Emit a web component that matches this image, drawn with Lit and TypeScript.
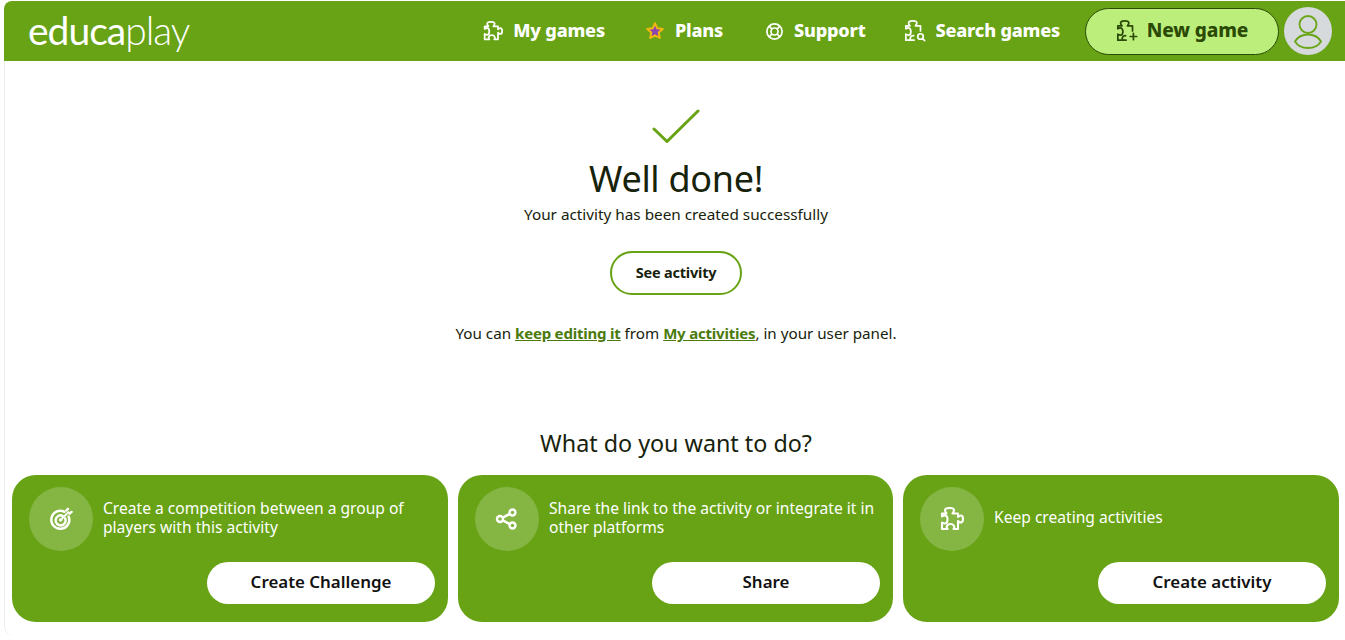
import { LitElement, html, css, svg } from "lit";
import { customElement } from "lit/decorators.js";

const GREEN = css`#67a315`;

const PUZZLE = "M2 6.500H6.500C5.500 5 5 4.300 5 3.300 5 1.600 7 1 9.500 1S14 1.600 14 3.300C14 4.300 13.500 5 12.500 6.500H18V10C19 8.800 20 8.500 20.800 8.500 22 8.500 23 10 23 12S22 15.500 20.800 15.500C20 15.500 19 15.200 18 14V22H13.500C14.500 20.800 14.500 20 14 19 13.500 17.800 12 17 10.500 17S7.500 17.800 7 19C6.500 20 6.500 20.800 7.500 22H2V15.500C3 16.200 4 16.500 4.800 16.500 6.500 16.500 7.500 14.500 7.500 12.500S6.500 8.500 4.800 8.500C4 8.500 3 8.800 2 9.500Z";
const PUZZLE_OPEN = "M11 22H7.500C6.500 20.800 6.500 20 7 19 7.500 17.800 9 17 10.500 17M7.500 22H2V15.500C3 16.200 4 16.500 4.800 16.500 6.500 16.500 7.500 14.500 7.500 12.500S6.500 8.500 4.800 8.500C4 8.500 3 8.800 2 9.500V6.500H6.500C5.500 5 5 4.300 5 3.300 5 1.600 7 1 9.500 1S14 1.600 14 3.300C14 4.300 13.500 5 12.500 6.500H18V12";

const puzzle = (s: number) => html`<svg class="ic" width=${s} height=${s} viewBox="0 0 24 24" fill="none" stroke="currentColor" stroke-width="2.100" stroke-linejoin="round"><path d=${PUZZLE}></path></svg>`;

const puzzleExtra = (s: number, extra: unknown) => html`<svg class="ic" width=${s} height=${s} viewBox="0 0 24 24" fill="none" stroke="currentColor" stroke-width="1.900" stroke-linecap="round" stroke-linejoin="round">
  <path d=${PUZZLE_OPEN}></path>
  ${extra}
</svg>`;

const target = html`<svg class="ic" width="26" height="26" viewBox="0 0 26 26" fill="none" stroke="#fff" stroke-linecap="round">
  <path d="M16.500 5.800A9 9 0 1 0 20.700 10.500" stroke-width="2.500"></path>
  <path d="M14.600 9.800A5 5 0 1 0 17.200 12.400" stroke-width="2.500"></path>
  <circle cx="12.600" cy="14" r="1.800" fill="#fff" stroke="none"></circle>
  <path d="M12.600 14 20.500 6.100" stroke-width="1.900"></path>
  <path d="M18.300 4.500 20 2.800M21.600 7.700 23.600 5.900" stroke-width="2.400"></path>
</svg>`;

const share = html`<svg class="ic" width="26" height="26" viewBox="0 0 26 26" fill="none" stroke="#fff" stroke-width="2.400">
  <circle cx="6" cy="13" r="3"></circle><circle cx="18.500" cy="6.500" r="3"></circle><circle cx="18.500" cy="19.500" r="3"></circle>
  <path d="M8.700 11.600 15.800 7.900M8.700 14.400 15.800 18.100"></path>
</svg>`;

const star = html`<svg class="ic" width="20" height="20" viewBox="0 0 20 20"><path d="M10 2.200 12.300 7.300 17.800 7.900 13.700 11.600 14.800 17 10 14.300 5.200 17 6.300 11.600 2.200 7.900 7.700 7.300Z" fill="#8e44ad" stroke="#f1b90f" stroke-width="2" stroke-linejoin="round"></path></svg>`;

const lifebuoy = html`<svg class="ic" width="19" height="19" viewBox="0 0 20 20" fill="none" stroke="#fff" stroke-width="1.800">
  <circle cx="10" cy="10" r="8"></circle><circle cx="10" cy="10" r="3.700"></circle>
  <path d="M4.400 4.400 7.400 7.400M15.600 4.400 12.600 7.400M4.400 15.600 7.400 12.600M15.600 15.600 12.600 12.600"></path>
</svg>`;

const avatar = html`<svg width="48" height="48" viewBox="0 0 48 48" fill="none" stroke="#6aa516" stroke-width="1.800">
  <circle cx="24" cy="17.500" r="8.500"></circle>
  <path d="M11 34.500C14 29.500 19 27.500 24 27.500S34 29.500 37 34.500C34 39.500 29 41 24 41S14 39.500 11 34.500Z"></path>
</svg>`;

@customElement("app-root")
export class AppRoot extends LitElement {
  static styles = css`
    :host {
      display: flex;
      flex-direction: column;
      height: 640px;
      box-sizing: border-box;
      padding: 1px 0 0 4px;
      background: #fff;
      overflow: hidden;
      font-family: "Noto Sans", sans-serif;
      color: #17220b;
    }
    .ic { display: block; flex: none; }
    header {
      height: 60px;
      flex: none;
      background: ${GREEN};
      border-top-left-radius: 8px;
      display: flex;
      align-items: center;
      color: #fff;
      padding: 0 13px 0 24px;
    }
    .logo {
      font-family: "Lato", sans-serif;
      font-size: 39px;
      font-weight: 400;
      letter-spacing: -1px;
      line-height: 40px;
      margin-top: -3px;
      margin-right: auto;
    }
    .logo span { font-weight: 300; }
    nav { display: flex; align-items: center; }
    .nav-item {
      display: flex;
      align-items: center;
      gap: 10px;
      font-size: 18.100px;
      font-weight: 800;
      letter-spacing: -0.2px;
      white-space: nowrap;
    }
    .nav-item span { margin-top: -3px; }
    .new span { margin-top: -2px; }
    .g40 { margin-right: 40px; }
    .g42 { margin-right: 42px; }
    .g38 { margin-right: 38px; }
    .new {
      display: flex;
      align-items: center;
      justify-content: center;
      gap: 9px;
      box-sizing: border-box;
      width: 194px;
      height: 47px;
      border-radius: 24px;
      background: #bcee7c;
      border: 1px solid #2b4a05;
      color: #2b4a05;
      font-size: 19px;
      font-weight: 800;
      letter-spacing: -0.1px;
      margin-left: 25px;
    }
    .avatar {
      width: 48px;
      height: 48px;
      border-radius: 50%;
      background: #d6dadd;
      margin-left: 5px;
      flex: none;
    }
    main {
      flex: none;
      height: 575px;
      box-sizing: border-box;
      display: flex;
      flex-direction: column;
      align-items: center;
      padding-left: 2px;
      border-left: 1px solid #ececec;
      border-bottom-left-radius: 10px;
    }
    .check { margin-top: 48px; }
    h1 {
      margin: 10px 0 0;
      font-size: 36px;
      line-height: 48px;
      font-weight: 400;
      letter-spacing: -0.3px;
    }
    .sub { margin: 0; font-size: 15.300px; line-height: 22px; }
    .see {
      box-sizing: border-box;
      margin-top: 26px;
      padding-bottom: 3px;
      width: 132px;
      height: 44px;
      border-radius: 22px;
      border: 2px solid ${GREEN};
      display: flex;
      align-items: center;
      justify-content: center;
      font-size: 14.500px;
      font-weight: 700;
      letter-spacing: -0.2px;
    }
    .links { margin: 27px 0 0; font-size: 15.200px; line-height: 22px; }
    .links a { color: #4a7a0c; font-size: 15px; font-weight: 700; letter-spacing: -0.2px; text-decoration: underline; }
    h2 {
      margin: 83px 0 0;
      font-size: 23.300px;
      line-height: 32px;
      font-weight: 400;
    }
    .cards {
      align-self: stretch;
      display: grid;
      grid-template-columns: 436px 435px 436px;
      gap: 10px;
      margin: 16px 0 0 5px;
    }
    .card {
      background: ${GREEN};
      border-radius: 24px;
      height: 147px;
      box-sizing: border-box;
      padding: 12px 13px 18px 17px;
      display: flex;
      flex-direction: column;
      color: #fff;
    }
    .top { display: flex; align-items: center; gap: 10px; }
    .bubble {
      width: 64px;
      height: 64px;
      border-radius: 50%;
      background: rgba(255, 255, 255, 0.2);
      display: flex;
      align-items: center;
      justify-content: center;
      flex: none;
    }
    .text { font-size: 15.600px; line-height: 19px; flex: 1; margin-top: -3px; }
    .btn {
      margin-top: auto;
      align-self: flex-end;
      box-sizing: border-box;
      padding-bottom: 4px;
      width: 228px;
      height: 42px;
      border-radius: 21px;
      background: #fff;
      color: #111;
      display: flex;
      align-items: center;
      justify-content: center;
      font-size: 16.900px;
      font-weight: 600;
    }
  `;

  render() {
    const plus = svg`<path d="M19 14.500v7M15.500 18h7"></path>`;
    const lens = svg`<circle cx="18" cy="18" r="3"></circle><path d="M20.300 20.300 22.500 22.500"></path>`;
    const cards = [
      { icon: target, text: "Create a competition between a group of players with this activity", btn: "Create Challenge" },
      { icon: share, text: "Share the link to the activity or integrate it in other platforms", btn: "Share" },
      { icon: puzzle(24), text: "Keep creating activities", btn: "Create activity" },
    ];
    return html`
      <header>
        <div class="logo">educa<span>play</span></div>
        <nav>
          <div class="nav-item g40">${puzzle(20)}<span>My games</span></div>
          <div class="nav-item g42">${star}<span>Plans</span></div>
          <div class="nav-item g38">${lifebuoy}<span>Support</span></div>
          <div class="nav-item">${puzzleExtra(22, lens)}<span>Search games</span></div>
        </nav>
        <div class="new">${puzzleExtra(22, plus)}<span>New game</span></div>
        <div class="avatar">${avatar}</div>
      </header>
      <main>
        <svg class="check" width="48" height="36" viewBox="0 0 48 36" fill="none" stroke="#67a315" stroke-width="3" stroke-linecap="round" stroke-linejoin="round"><path d="M2 20 15 32.500 46 2"></path></svg>
        <h1>Well done!</h1>
        <p class="sub">Your activity has been created successfully</p>
        <div class="see">See activity</div>
        <p class="links">You can <a>keep editing it</a> from <a>My activities</a>, in your user panel.</p>
        <h2>What do you want to do?</h2>
        <div class="cards">
          ${cards.map(c => html`<div class="card">
            <div class="top"><div class="bubble">${c.icon}</div><div class="text">${c.text}</div></div>
            <div class="btn">${c.btn}</div>
          </div>`)}
        </div>
      </main>
    `;
  }
}
